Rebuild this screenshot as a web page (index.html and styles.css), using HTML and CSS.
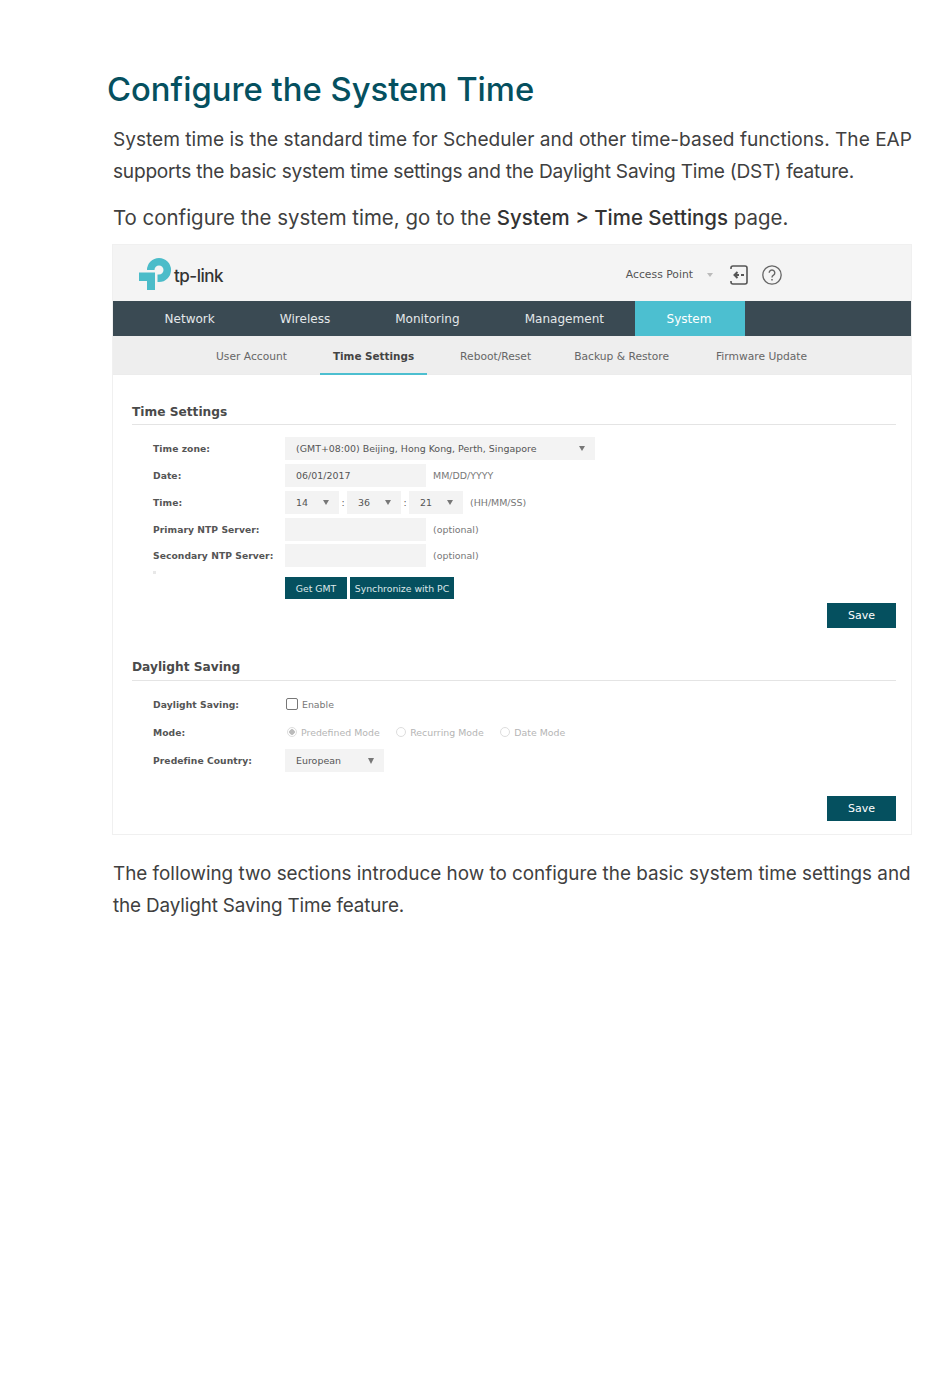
FILE: index.html
```html
<!DOCTYPE html>
<html lang="en">
<head>
<meta charset="utf-8">
<title>Configure the System Time</title>
<link rel="stylesheet" href="styles.css">
</head>
<body>
<main class="page">
  <h1 class="title">Configure the System Time</h1>
  <div class="copy">
    <p class="para">System time is the standard time for Scheduler and other time-based functions. The EAP<br><span class="tight">supports the basic system time settings and the Daylight Saving Time (DST) feature.</span></p>
    <p class="para para-gap">To configure the system time, go to the <b class="strong">System &gt; Time Settings</b> page.</p>
    <section class="shot">
      <header class="top">
        <div class="logo">
          <svg class="logo-mark" width="32" height="33" viewBox="0 0 32 33">
            <path d="M8 12a12 12 0 1 1 12 12h-1.500v-7.500H20a4.500 4.500 0 1 0-4.500-4.500z" fill="#4bbcc9"/>
            <path d="M0 14.500h16V32H8v-9H0z" fill="#4bbcc9"/>
          </svg>
          <span class="logo-text">tp-link</span>
        </div>
        <div class="tools">
          <span class="mode">Access Point</span>
          <span class="mode-caret"></span>
          <svg class="tool-icon" width="18" height="20" viewBox="0 0 18 20" fill="none" stroke="#555" stroke-width="1.6">
            <path d="M1 4V3a2 2 0 0 1 2-2h12a2 2 0 0 1 2 2v14a2 2 0 0 1-2 2H3a2 2 0 0 1-2-2v-1"/>
            <path d="M5 10h4M11 10h3" stroke-width="2"/>
            <path d="M7.500 7l-3 3 3 3" stroke-width="2"/>
          </svg>
          <svg class="tool-icon help" width="20" height="20" viewBox="0 0 20 20" fill="none" stroke="#666" stroke-width="1.3">
            <circle cx="10" cy="10" r="9.200"/>
            <path d="M7.200 7.800a2.800 2.800 0 1 1 4.300 2.400c-1 .6-1.500 1-1.500 2.300" stroke-width="1.400"/>
            <path d="M10 14v1.600" stroke-width="1.500"/>
          </svg>
        </div>
      </header>
      <nav class="nav">
        <a class="nav-item">Network</a>
        <a class="nav-item">Wireless</a>
        <a class="nav-item">Monitoring</a>
        <a class="nav-item">Management</a>
        <a class="nav-item nav-active">System</a>
      </nav>
      <nav class="sub">
        <a class="sub-item">User Account</a>
        <a class="sub-item sub-active">Time Settings</a>
        <a class="sub-item">Reboot/Reset</a>
        <a class="sub-item sub-tight">Backup &amp; Restore</a>
        <a class="sub-item sub-wide">Firmware Update</a>
      </nav>
      <div class="panel">
        <h2 class="sec-title">Time Settings</h2>
        <div class="form">
          <div class="row">
            <label class="lbl">Time zone:</label>
            <div class="select w-tz"><span>(GMT+08:00) Beijing, Hong Kong, Perth, Singapore</span><i class="caret"></i></div>
          </div>
          <div class="row">
            <label class="lbl">Date:</label>
            <div class="input">06/01/2017</div><span class="hint">MM/DD/YYYY</span>
          </div>
          <div class="row">
            <label class="lbl">Time:</label>
            <div class="select w-t"><span>14</span><i class="caret"></i></div><span class="colon">:</span>
            <div class="select w-t"><span>36</span><i class="caret"></i></div><span class="colon">:</span>
            <div class="select w-t"><span>21</span><i class="caret"></i></div><span class="hint">(HH/MM/SS)</span>
          </div>
          <div class="row">
            <label class="lbl">Primary NTP Server:</label>
            <div class="input"></div><span class="hint">(optional)</span>
          </div>
          <div class="row">
            <label class="lbl">Secondary NTP Server:</label>
            <div class="input"></div><span class="hint">(optional)</span>
          </div>
        </div>
        <div class="btns">
          <span class="dot"></span>
          <button class="btn btn-gmt">Get GMT</button>
          <button class="btn btn-sync">Synchronize with PC</button>
        </div>
        <div class="save-row save-a"><button class="save">Save</button></div>
        <h2 class="sec-title sec-2">Daylight Saving</h2>
        <div class="form form-2">
          <div class="row row-a">
            <label class="lbl">Daylight Saving:</label>
            <span class="check"></span><span class="opt">Enable</span>
          </div>
          <div class="row row-b">
            <label class="lbl">Mode:</label>
            <span class="radio radio-on"></span><span class="opt off">Predefined Mode</span>
            <span class="radio"></span><span class="opt off">Recurring Mode</span>
            <span class="radio"></span><span class="opt off">Date Mode</span>
          </div>
          <div class="row row-c">
            <label class="lbl">Predefine Country:</label>
            <div class="select w-c"><span>European</span><i class="caret caret-lg"></i></div>
          </div>
        </div>
        <div class="save-row save-b"><button class="save">Save</button></div>
      </div>
    </section>
    <p class="para para-after">The following two sections introduce how to configure the basic system time settings and<br><span class="tight-2">the Daylight Saving Time feature.</span></p>
  </div>
</main>
</body>
</html>
```
FILE: styles.css
```css
* { box-sizing: border-box; }
html, body { margin: 0; background: #fff; }
body { font-family: "Inter", "Liberation Sans", sans-serif; color: #3c3c3c; }
.page { width: 950px; height: 1387px; padding: 68px 20px 0 107px; overflow: hidden; }
.title { margin: 0; font-size: 32.8px; line-height: 42px; font-weight: 500; color: #05505f; }
.copy { padding-left: 6px; margin-top: 13px; }
.para { margin: 0; font-size: 19.1px; line-height: 32px; font-weight: 400; color: #404040; white-space: nowrap; }
.tight { letter-spacing: -.22px; }
.tight-2 { letter-spacing: -.13px; }
.para-gap { margin-top: 15px; font-size: 20.45px; }
.para-after { margin-top: 23px; font-size: 18.88px; }
.strong { font-weight: 500; color: #333; }
.shot { margin: 10px 0 0 -1px; width: 800px; height: 591px; border: 1px solid #f0f0f0; font-family: "DejaVu Sans", sans-serif; font-size: 10px; white-space: normal; }
.top { height: 56px; background: #f4f4f4; display: flex; justify-content: space-between; align-items: center; padding: 4px 129px 0 26px; }
.logo { display: flex; align-items: center; }
.logo-mark { display: block; margin-top: -2px; }
.logo-text { font-family: "Inter", sans-serif; font-size: 17px; font-weight: 500; color: #333; margin: 3px 0 0 3px; letter-spacing: -0.5px; line-height: 25px; }
.tools { display: flex; align-items: center; margin-top: -1px; }
.mode { font-size: 10.8px; color: #555; }
.mode-caret { width: 0; height: 0; border: 3.5px solid transparent; border-top: 4px solid #bbb; border-bottom: 0; margin: 0 17px 0 14px; }
.tool-icon { display: block; }
.help { margin-left: 14px; }
.nav { height: 35px; background: #3a4a53; display: flex; padding-left: 19px; }
.nav-item { color: #e4e8ea; font-size: 12.05px; line-height: 36px; padding: 0 32.5px; }
.nav-active { background: #4cbfd0; color: #fff; width: 110px; margin-left: -2px; padding: 0 0 0 32px; }
.sub { height: 39px; background: #eeeeee; display: flex; gap: 20px; padding-left: 90px; border-bottom: 1px solid #ececec; }
.sub-item { color: #666; font-size: 10.7px; line-height: 41px; height: 39px; padding: 0 13px; white-space: nowrap; }
.sub-active { color: #444; font-weight: 700; font-size: 10.4px; line-height: 40px; border-bottom: 2px solid #4cbfd0; }
.sub-tight { margin-left: -3px; }
.sub-wide { margin-left: 1px; }
.panel { padding: 0 15px 0 19px; }
.sec-title { margin: 0; padding-top: 28px; height: 50px; border-bottom: 1px solid #e4e4e4; font-size: 12.2px; line-height: 18px; font-weight: 700; color: #4a4a4a; }
.sec-2 { padding-top: 0; margin-top: 30px; height: 23px; }
.form { padding: 10.5px 0 0 21px; }
.row { display: flex; align-items: center; height: 26.75px; }
.lbl { width: 132px; font-size: 9.2px; font-weight: 700; color: #555; white-space: nowrap; letter-spacing: .05px; }
.select, .input { height: 23px; background: #f3f3f3; font-size: 9.45px; color: #555; display: flex; align-items: center; padding-left: 11px; }
.select { justify-content: space-between; padding-right: 10px; }
.input { width: 141px; }
.w-tz { width: 310px; }
.w-t { width: 54px; }
.w-c { width: 99px; }
.caret { width: 0; height: 0; border: 3px solid transparent; border-top: 5px solid #777; border-bottom: 0; }
.caret-lg { border-width: 6px 3.5px 0; border-top-color: #777; }
.colon { width: 8px; text-align: center; color: #555; font-size: 9.4px; }
.hint { margin-left: 7px; font-size: 9.45px; color: #777; }
.btns { display: flex; gap: 3px; padding: 8px 0 0 21px; }
.dot { width: 3px; height: 3px; margin: -6px 126px 0 0; background: #e8e8e8; }
.btn { height: 22px; border: 0; background: #05505f; color: #dfe8ea; font-family: inherit; font-size: 9.3px; padding: 0; }
.btn-gmt { width: 62px; }
.btn-sync { width: 104px; }
.save-row { display: flex; justify-content: flex-end; }
.save-a { margin-top: 3.5px; }
.save-b { margin-top: 21px; }
.save { width: 69px; height: 25px; border: 0; background: #05505f; color: #fff; font-family: inherit; font-size: 11px; padding: 0; }
.form-2 { padding-top: 10px; }
.row-a { height: 27px; }
.row-b { height: 29px; }
.row-c { height: 28px; }
.check { width: 12px; height: 12px; margin-left: 1px; border: 1px solid #777; border-radius: 2px; background: #fff; }
.opt { margin-left: 4px; font-size: 9.4px; color: #777; }
.off { margin-right: 14.5px; color: #b5b5b5; }
.radio { width: 10px; height: 10px; border: 1px solid #ddd; border-radius: 50%; margin-left: 2px; }
.radio-on { background: radial-gradient(circle, #bbb 0 2.5px, #fff 3px); }
```
